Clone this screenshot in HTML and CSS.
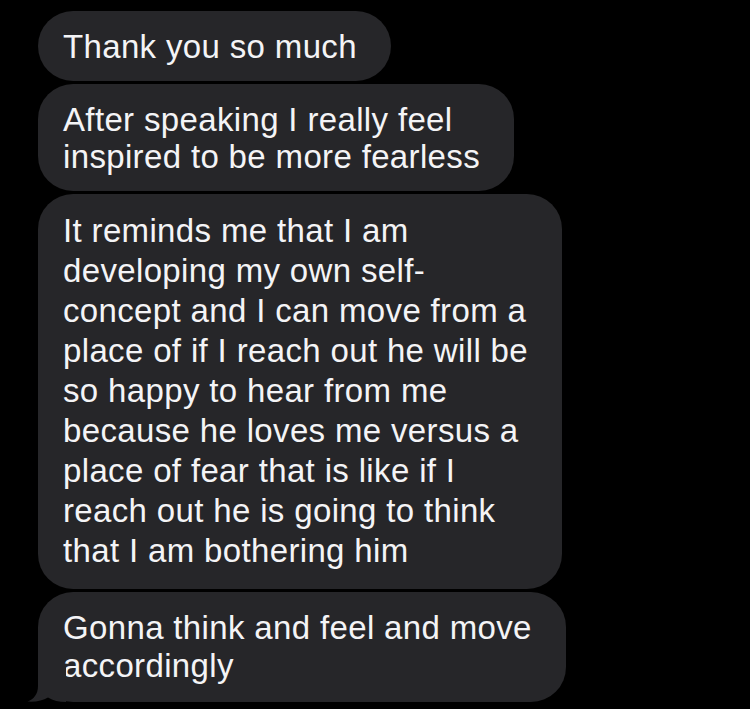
FILE: index.html
```html
<!DOCTYPE html>
<html lang="en">
<head>
<meta charset="utf-8">
<title>Messages</title>
<link rel="stylesheet" href="styles.css">
</head>
<body>
<main class="thread">
  <div class="bubble">Thank you so much</div>
  <div class="bubble">After speaking I really feel<br>inspired to be more fearless</div>
  <div class="bubble bubble--loose">It reminds me that I am<br>developing my own self-<br>concept and I can move from a<br>place of if I reach out he will be<br>so happy to hear from me<br>because he loves me versus a<br>place of fear that is like if I<br>reach out he is going to think<br>that I am bothering him</div>
  <div class="bubble bubble--last">Gonna think and feel and move<br>accordingly<svg class="tail" viewBox="0 0 40 36" width="40" height="36" aria-hidden="true"><path d="M12 0 L12 20 C12 28 8 33 1.5 35.6 C10 36.2 17 34.5 22 31.5 C27 34.5 33 36 40 36 L40 0 Z"/></svg></div>
</main>
</body>
</html>
```

FILE: styles.css
```css
html, body {
  margin: 0;
  padding: 0;
  background: #000;
}

body {
  width: 750px;
  height: 709px;
  overflow: hidden;
}

.thread {
  display: flex;
  flex-direction: column;
  align-items: flex-start;
  gap: 3px;
  padding: 11px 0 0 38px;
}

.bubble {
  position: relative;
  background: #262629;
  color: #f4f4f6;
  font-family: "Liberation Sans", Arial, sans-serif;
  font-size: 33px;
  line-height: 37px;
  letter-spacing: 0.35px;
  white-space: nowrap;
  padding: 17px 34px 16px 25px;
  border-radius: 35px;
}

.bubble--loose {
  line-height: 40px;
  padding-bottom: 18px;
}

.bubble--last {
  line-height: 38px;
  padding-bottom: 17px;
}

.tail {
  position: absolute;
  left: -12px;
  bottom: 0;
  display: block;
}

.tail path {
  fill: #262629;
}
```
